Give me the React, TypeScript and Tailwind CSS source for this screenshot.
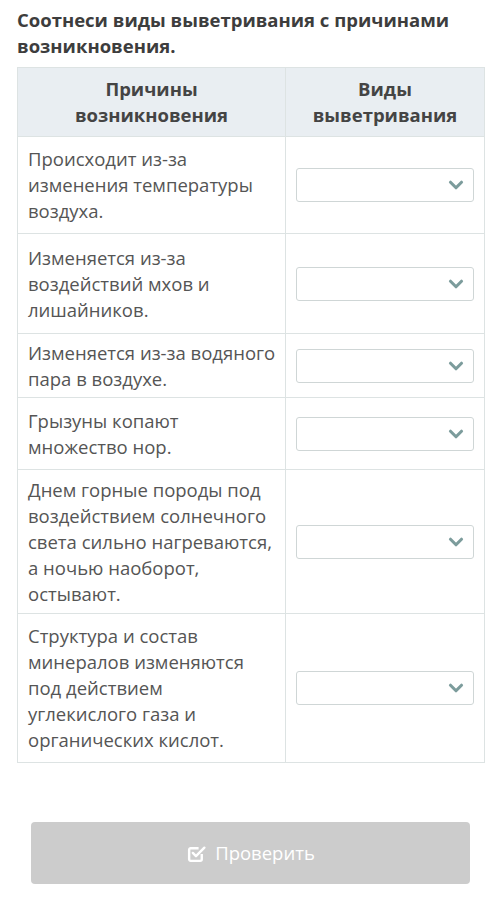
import { ChevronDown } from 'lucide-react'

const rows = [
  { text: 'Происходит из-за изменения температуры воздуха.', h: 'h-[97px]' },
  { text: 'Изменяется из-за воздействий мхов и лишайников.', h: 'h-[100px]' },
  { text: 'Изменяется из-за водяного пара в воздухе.', h: 'h-[64px]' },
  { text: 'Грызуны копают множество нор.', h: 'h-[72px]' },
  {
    text: 'Днем горные породы под воздействием солнечного света сильно нагреваются, а ночью наоборот, остывают.',
    h: 'h-[144px]',
  },
  {
    text: 'Структура и состав минералов изменяются под действием углекислого газа и органических кислот.',
    h: 'h-[149px]',
  },
]

function Select() {
  return (
    <div className="flex h-[34px] w-[178px] items-center justify-end rounded-[3px] border border-[#cfd6d6] bg-white pr-[6px]">
      <ChevronDown className="h-[22px] w-[22px] text-[#7c9c9c]" strokeWidth={3.4} />
    </div>
  )
}

function CheckSquare() {
  return (
    <svg width="21" height="21" viewBox="0 0 20 20" fill="none" stroke="white" strokeWidth="2.3">
      <path d="M15 10.5v5a1.5 1.5 0 0 1-1.5 1.5h-9A1.5 1.5 0 0 1 3 15.5v-9A1.5 1.5 0 0 1 4.5 5H12" />
      <path d="M6.5 9.5l3 3 8-8" strokeLinecap="round" strokeLinejoin="round" />
    </svg>
  )
}

export default function App() {
  return (
    <div className="min-h-[901px] w-[500px] bg-white font-['Open_Sans',sans-serif]">
      <div className="px-[17px] pt-[7px]">
        <h1 className="text-[18.5px] font-bold leading-[26px] text-[#3d3d3d]">
          Соотнеси виды выветривания с причинами возникновения.
        </h1>
        <table className="mt-[8px] w-[468px] border-collapse text-[18.5px] leading-[26px] text-[#555]">
          <thead>
            <tr className="h-[69px] bg-[#e9eef2]">
              <th className="w-[268px] border border-[#dde3e3] px-[10px] text-center font-bold text-[#444]">
                Причины
                <br />
                возникновения
              </th>
              <th className="border border-[#dde3e3] px-[10px] text-center font-bold text-[#444]">
                Виды
                <br />
                выветривания
              </th>
            </tr>
          </thead>
          <tbody>
            {rows.map((r) => (
              <tr key={r.text} className={r.h}>
                <td className="border border-[#dde3e3] py-[4px] pl-[10px] pr-[9px] align-middle">{r.text}</td>
                <td className="border border-[#dde3e3] px-[10px] align-middle">
                  <Select />
                </td>
              </tr>
            ))}
          </tbody>
        </table>
      </div>
      <div className="mt-[59px] px-[31px]">
        <button className="flex h-[62px] w-[439px] items-center justify-center gap-[8px] rounded-[4px] bg-[#cccccc] text-[18.5px] text-white">
          <CheckSquare />
          Проверить
        </button>
      </div>
    </div>
  )
}
